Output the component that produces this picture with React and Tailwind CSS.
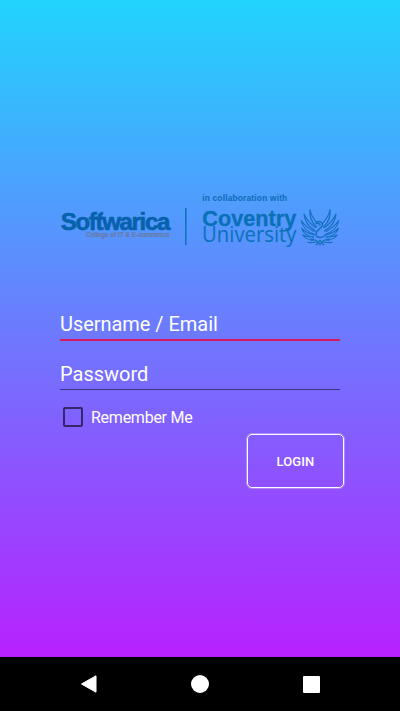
const feathers = [
  'M16.5 19 C11.5 14 9 9 10 1.5 C11 8 14.5 12 17 15',
  'M15.5 23 C9 19 4.5 13.5 4 6 C6.5 12 11.5 16.5 15.5 19.5',
  'M14.5 26.5 C8 24 2.5 19 1.2 12.5 C5 18 9.5 21 14 23.5',
  'M14 29 C8.5 29 3.5 25.5 1.6 20.5 C5.5 24 10 26 14 26.8',
  'M13.5 31.2 C9 32 5 30 2.8 27 C6.5 28.6 10 29.2 13.5 29',
];

function Phoenix() {
  return (
    <g transform="translate(240 18)" fill="none" stroke="#126fbc" strokeWidth="1.15" strokeLinecap="round" strokeLinejoin="round">
      {feathers.map((d) => <path key={d} d={d} />)}
      <g transform="translate(40 0) scale(-1 1)">
        {feathers.map((d) => <path key={d} d={d} />)}
      </g>
      <path d="M16 15.5 C17.5 12.5 22.5 13 22.5 16.8 C22.5 20.5 16 21.5 16 26 C16 30.5 23 30.5 25.5 26.5" strokeWidth="1.4" />
      <path d="M17.5 16 C19 14.8 20.5 15.8 19.8 17.8 M11 32.5 C15 31 17 32 20 36.8 C23 32 25 31 29 32.5 M8 34.2 C12 35.5 15 34 17 34 M32 34.2 C28 35.5 25 34 23 34 M16 37 C18 36 19 34 20 32 C21 34 22 36 24 37" />
    </g>
  );
}

function Logo() {
  return (
    <svg className="block h-14 w-[280px] overflow-visible" viewBox="0 0 280 56" role="img" aria-label="Softwarica, Coventry University">
      <text x="0.8" y="39.6" textLength="109.5" lengthAdjust="spacing" fontFamily="Liberation Sans" fontWeight="700" fontSize="24" fill="#0662ad" stroke="#0662ad" strokeWidth=".65">Softwarica</text>
      <path d="M40.2 27 v-1.8 q0-2 3-2" fill="none" stroke="#0662ad" strokeWidth="3" />
      <text x="26" y="46.9" textLength="83.5" lengthAdjust="spacingAndGlyphs" fontFamily="Liberation Sans" fontSize="6.8" fill="#6d7690" stroke="#6d7690" strokeWidth=".2">College of IT &amp; E-commerce</text>
      <rect x="125" y="18" width="1.6" height="37" fill="#1173bf" />
      <text x="142.2" y="10.8" textLength="85" fontFamily="Liberation Sans" fontWeight="700" fontSize="8.3" fill="#0d6cb8">in collaboration with</text>
      <text x="142.3" y="35.8" textLength="94" lengthAdjust="spacingAndGlyphs" fontFamily="Liberation Sans" fontWeight="700" fontSize="22.5" fill="#0971b7" stroke="#0971b7" strokeWidth=".3">Coventry</text>
      <text x="142" y="52.3" textLength="94.5" lengthAdjust="spacingAndGlyphs" fontFamily="Open Sans" fontWeight="400" fontSize="21.5" fill="#0971b7">University</text>
      <Phoenix />
    </svg>
  );
}

export default function App() {
  return (
    <div className="flex h-[711px] w-[400px] flex-col overflow-hidden bg-black font-['Roboto',sans-serif] text-white">
      <main className="h-[657px] bg-linear-to-b/srgb from-[#21d4fd] to-[#b721ff] pt-[190px]">
        <div className="mx-[60px]">
          <Logo />
          <div className="mt-[66px] h-[29px] border-b-2 border-[#d5195e] text-[20px] leading-[24px] tracking-[-0.04px]">Username / Email</div>
          <div className="mt-[21px] h-[28px] border-b border-[#3e328c] text-[20px] leading-[24px]">Password</div>
          <div className="mt-[16px] flex h-[22px] items-center gap-2 pl-[3px]">
            <span className="size-5 rounded-[2px] border-2 border-[#35266b]" />
            <span className="pt-0.5 text-base leading-[22px] tracking-[-0.25px]">Remember Me</span>
          </div>
        </div>
        <button className="mt-[6px] ml-[247px] flex h-[54px] w-[97px] items-center justify-center rounded-[5px] border border-white pt-0.5 text-[13px] font-medium tracking-[0.1px] outline outline-white/30">LOGIN</button>
      </main>
      <nav className="flex h-[54px] items-center justify-between pr-[80px] pl-[79px]">
        <svg className="h-[18px] w-[18px]" viewBox="0 0 18 18"><path d="M2.5 9 L17 .8 V17.2 Z" fill="white" stroke="white" strokeLinejoin="round" /></svg>
        <span className="size-[18px] rounded-full bg-white" />
        <span className="size-[17px] rounded-[1px] bg-white" />
      </nav>
    </div>
  );
}
